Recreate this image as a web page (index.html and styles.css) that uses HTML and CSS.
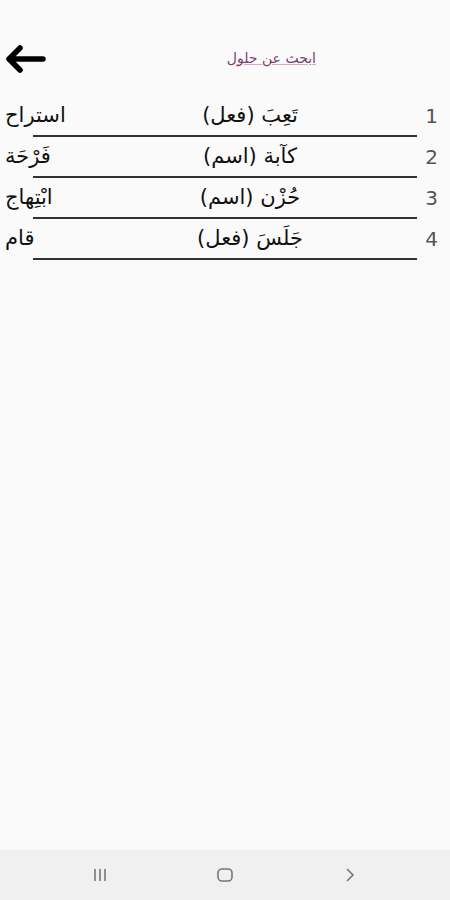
FILE: index.html
```html
<!DOCTYPE html>
<html lang="ar" dir="rtl">
<head>
    <meta charset="UTF-8">
    <meta name="viewport" content="width=device-width, initial-scale=1.0">
    <title>حلول</title>
    <link rel="stylesheet" href="styles.css">
</head>
<body>
    <div class="screen">
        <header class="top">
            <a class="search-link" href="#">ابحث عن حلول</a>
            <a class="back" href="#" aria-label="رجوع">
                <svg width="42" height="30" viewBox="0 0 42 30">
                    <path d="M39 15 H6 M16 4 L5 15 L16 26" fill="none" stroke="#000" stroke-width="5.5" stroke-linecap="round" stroke-linejoin="round"/>
                </svg>
            </a>
        </header>

        <section class="list">
            <div class="row">
                <span class="num">1</span>
                <span class="word">تَعِبَ (فعل)</span>
                <span class="answer">استراح</span>
                <span class="rule"></span>
            </div>
            <div class="row">
                <span class="num">2</span>
                <span class="word">كآبة (اسم)</span>
                <span class="answer">فَرْحَة</span>
                <span class="rule"></span>
            </div>
            <div class="row">
                <span class="num">3</span>
                <span class="word">حُزْن (اسم)</span>
                <span class="answer">ابْتِهاج</span>
                <span class="rule"></span>
            </div>
            <div class="row">
                <span class="num">4</span>
                <span class="word">جَلَسَ (فعل)</span>
                <span class="answer">قام</span>
                <span class="rule"></span>
            </div>
        </section>

        <footer class="navbar" dir="ltr">
            <svg width="16" height="16" viewBox="0 0 16 16">
                <path d="M3 2 V14 M8 2 V14 M13 2 V14" stroke="#777" stroke-width="1.6"/>
            </svg>
            <svg width="18" height="18" viewBox="0 0 18 18">
                <rect x="2" y="3" width="14" height="12" rx="4" fill="none" stroke="#777" stroke-width="1.6"/>
            </svg>
            <svg width="16" height="16" viewBox="0 0 16 16">
                <path d="M5 2 L11 8 L5 14" fill="none" stroke="#777" stroke-width="1.6"/>
            </svg>
        </footer>
    </div>
</body>
</html>
```

FILE: styles.css
```css
body {
    margin: 0;
    padding: 0;
    background-color: #fafafa;
    font-family: "DejaVu Sans", sans-serif;
    color: #111;
}
.screen {
    height: 900px;
    display: flex;
    flex-direction: column;
}
.top {
    display: flex;
    align-items: center;
    justify-content: space-between;
    height: 56px;
    margin-top: 31px;
    padding: 0 134px 0 4px;
}
.search-link {
    font-size: 14px;
    color: #7b3f6e;
    text-decoration: underline;
    text-decoration-color: #d9a8c8;
    margin-top: -3px;
}
.back {
    display: flex;
}
.list {
    flex: 1;
    padding-top: 9px;
}
.row {
    display: grid;
    grid-template-columns: 42px 1fr 92px;
    align-items: center;
    height: 41px;
    font-size: 21px;
}
.num {
    color: #555;
    font-size: 20px;
    text-align: right;
    padding-right: 12px;
    padding-top: 6px;
}
.word {
    text-align: center;
    padding-top: 4px;
}
.answer {
    text-align: left;
    padding-left: 5px;
    padding-top: 4px;
}
.rule {
    grid-column: 1 / -1;
    height: 2px;
    background-color: #333;
    margin: 0 33px;
    align-self: end;
}
.navbar {
    height: 50px;
    background-color: #f0f0f0;
    display: flex;
    align-items: center;
    justify-content: space-between;
    padding: 0 92px;
}
```
